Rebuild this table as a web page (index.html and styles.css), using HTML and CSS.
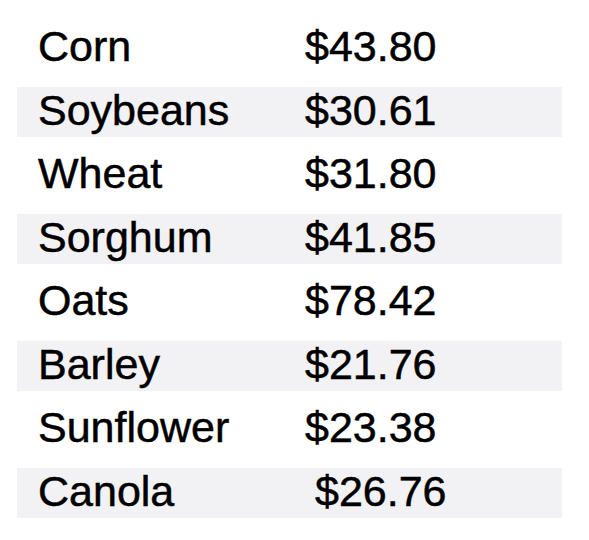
FILE: index.html
```html
<!DOCTYPE html>
<html>
<head>
<meta charset="utf-8">
<link rel="stylesheet" href="styles.css">
</head>
<body>
<div class="table">
  <div class="row"><span class="name">Corn</span><span class="price">$43.80</span></div>
  <div class="row alt"><span class="name">Soybeans</span><span class="price">$30.61</span></div>
  <div class="row"><span class="name">Wheat</span><span class="price">$31.80</span></div>
  <div class="row alt"><span class="name">Sorghum</span><span class="price">$41.85</span></div>
  <div class="row"><span class="name">Oats</span><span class="price">$78.42</span></div>
  <div class="row alt"><span class="name">Barley</span><span class="price">$21.76</span></div>
  <div class="row"><span class="name">Sunflower</span><span class="price">$23.38</span></div>
  <div class="row alt"><span class="name">Canola</span><span class="price indent">$26.76</span></div>
</div>
</body>
</html>
```
FILE: styles.css
```css
html, body {
  margin: 0;
  padding: 0;
  background: #ffffff;
}
body {
  font-family: "Liberation Sans", Arial, sans-serif;
  color: #000000;
}
.table {
  display: flex;
  flex-direction: column;
  gap: 13.5px;
  padding: 23.5px 0 0 17px;
  width: 545px;
}
.row {
  display: flex;
  align-items: center;
  height: 50px;
  font-size: 43px;
  line-height: 1;
  -webkit-text-stroke: 0.5px #000000;
}
.row.alt {
  background: #f2f2f4;
}
.name {
  box-sizing: border-box;
  width: 288px;
  padding-left: 21px;
  padding-bottom: 4px;
}
.price {
  padding-bottom: 4px;
}
.price.indent {
  padding-left: 10px;
}
```
